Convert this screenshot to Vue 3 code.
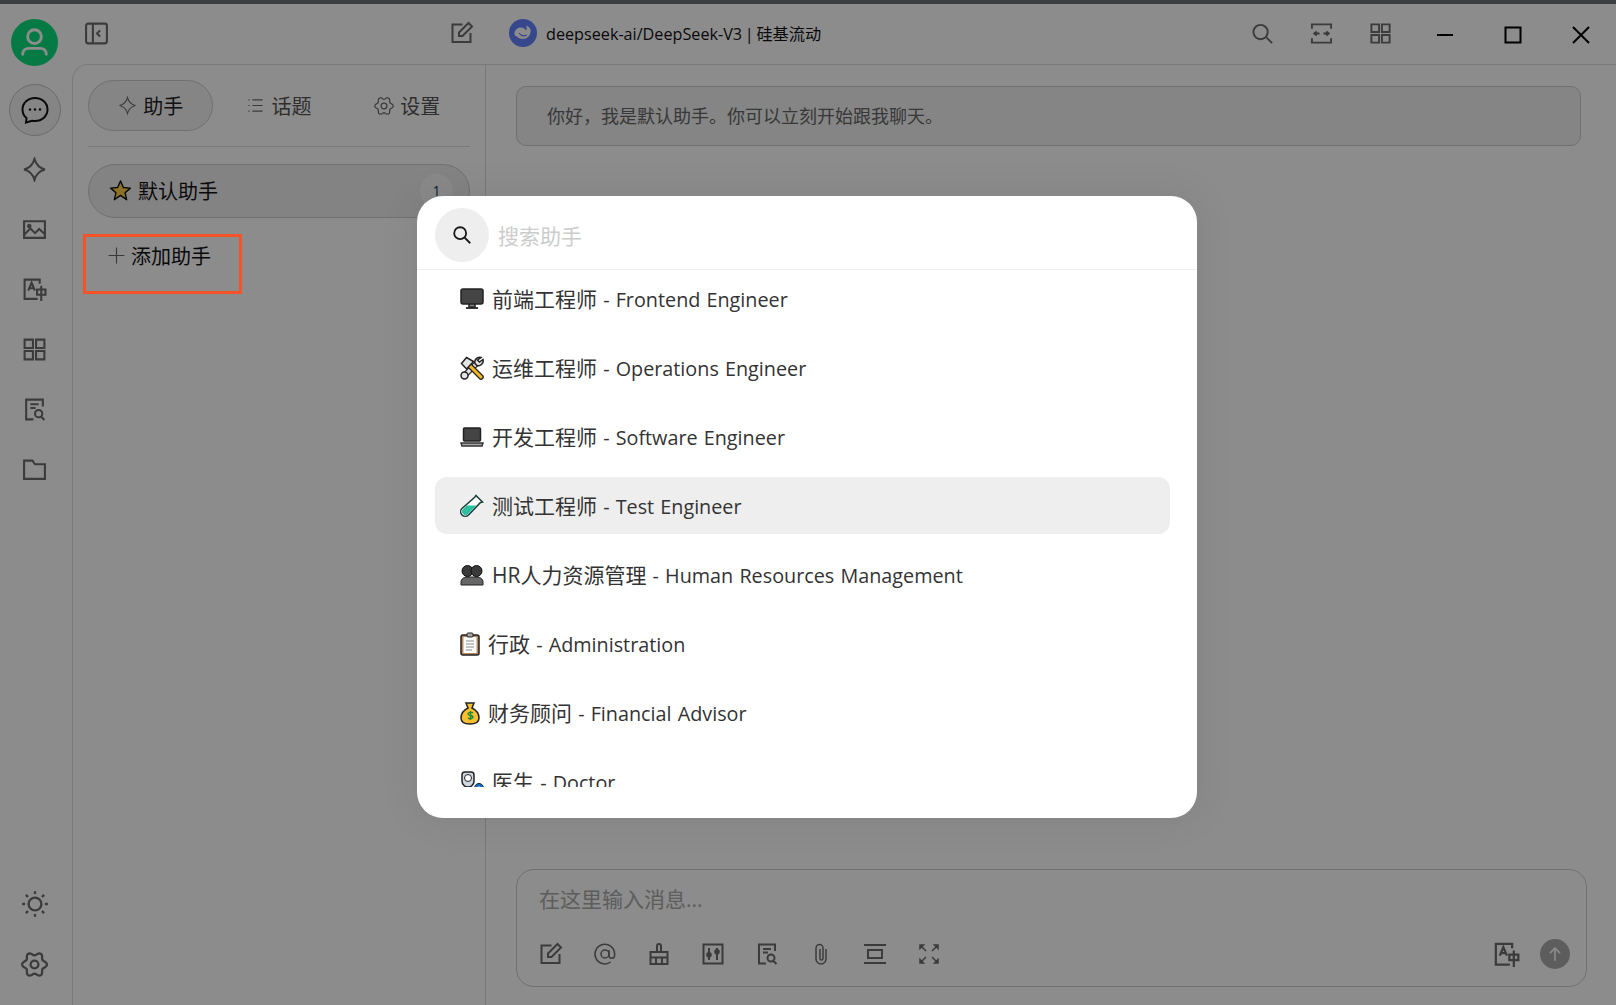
<script setup>
// six lobed outline, same shape as the settings icon in the reference
const gearOutline = Array.from({ length: 72 }, (_, i) => {
  const a = (i / 72) * Math.PI * 2
  const r = 9.6 + 1.5 * Math.cos(6 * a + Math.PI)
  const x = 12 + r * Math.sin(a)
  const y = 12 - r * Math.cos(a)
  return (i ? 'L' : 'M') + x.toFixed(2) + ' ' + y.toFixed(2)
}).join('') + 'z'

const icons = {
  collapse: ['M4 2.500h16a2 2 0 0 1 2 2v15a2 2 0 0 1-2 2H4a2 2 0 0 1-2-2v-15a2 2 0 0 1 2-2z', 'M8.500 2.500v19', 'M15.500 9l-3 3 3 3'],
  edit: ['M20.500 12v9h-18V3.500h10', 'M9 15v-3.500L18.500 2 22 5.500 12.500 15z'],
  search: ['M10 3a7.500 7.500 0 1 1 0 15 7.500 7.500 0 0 1 0-15z', 'M15.500 15.500L22 22'],
  expand: ['M2 7V2.500h20V7', 'M2 17v4.500h20V17', 'M4 12h6M7 10l-2.500 2 2.500 2', 'M20 12h-6M17 10l2.500 2-2.500 2'],
  grid: ['M2.500 2.500h8v8h-8z', 'M13.500 2.500h8v8h-8z', 'M2.500 13.500h8v8h-8z', 'M13.500 13.500h8v8h-8z'],
  star4: ['M12 2c1.500 5.500 4 8.500 10 10-6 1.500-8.500 4.500-10 10-1.500-5.500-4-8.500-10-10 6-1.500 8.500-4.500 10-10z'],
  image: ['M2 4h20v16H2z', 'M2 17l6-6 4.500 4.500 4-4L22 16.500', 'M7 7.500a1.200 1.200 0 1 1 0 2.400 1.200 1.200 0 0 1 0-2.400z'],
  translate: ['M17 6.500V2.500H2.500V21H15', 'M6 13l3.200-7.500L12.400 13M7.200 10.800h4', 'M14.500 12h8v5h-8zM18.500 8.500V23'],
  doc: ['M20 9V2.500H4v19h7', 'M8 7h8M8 10.500h5', 'M16 12.500a3.500 3.500 0 1 1 0 7 3.500 3.500 0 0 1 0-7zM18.500 19l3 3'],
  folder: ['M2 3.500h8l2.500 3.500H22v14H2z'],
  sun: ['M12 6.500a5.500 5.500 0 1 1 0 11 5.500 5.500 0 0 1 0-11z', 'M12 1v2.500M12 20.500V23M1 12h2.500M20.500 12H23M4.200 4.200L6 6M18 18l1.800 1.800M4.200 19.800L6 18M18 6l1.800-1.800'],
  gear: [gearOutline, 'M12 8.500a3.500 3.500 0 1 1 0 7 3.500 3.500 0 0 1 0-7z'],
  list: ['M8 5h13M8 12h13M8 19h13', 'M3 5h1.500M3 12h1.500M3 19h1.500'],
  plus: ['M12 2v20M2 12h20'],
  at: ['M12 8a4 4 0 1 1 0 8 4 4 0 0 1 0-8z', 'M16 8v5.500a2.800 2.800 0 0 0 5.600 0V12a9.800 9.800 0 1 0-4 8'],
  broom: ['M10 10V4a2 2 0 0 1 4 0v6', 'M3.500 22V10h17v12z', 'M3.500 15.500h17M9 15.500V22M15 15.500V22'],
  sliders: ['M2.500 2.500h19v19h-19z', 'M8 6v12M16 6v12', 'M8 11a1.800 1.800 0 1 1 0 3.600 1.800 1.800 0 0 1 0-3.600zM16 8a1.800 1.800 0 1 1 0 3.600 1.800 1.800 0 0 1 0-3.600z'],
  clip: ['M17 7v10a5 5 0 0 1-10 0V6a3.500 3.500 0 0 1 7 0v10.500a1.500 1.500 0 0 1-3 0V7'],
  compress: ['M1 3h22M1 21h22', 'M5 8h14v8H5z'],
  fullscreen: ['M3 3h3.500L3 6.500zM4 4l5 5', 'M21 3h-3.500L21 6.500zM20 4l-5 5', 'M3 21h3.500L3 17.500zM4 20l5-5', 'M21 21h-3.500l3.500-3.500zM20 20l-5-5'],
  win_min: ['M4 12h16'],
  win_max: ['M4.500 4.500h15v15h-15z'],
  win_close: ['M4 4l16 16M20 4L4 20']
}

const navItems = ['star4', 'image', 'translate', 'grid', 'doc', 'folder']
const toolItems = ['edit', 'at', 'broom', 'sliders', 'doc', 'clip', 'compress', 'fullscreen']

const assistants = [
  { id: 'monitor', zh: '前端工程师', en: 'Frontend Engineer' },
  { id: 'tools', zh: '运维工程师', en: 'Operations Engineer' },
  { id: 'laptop', zh: '开发工程师', en: 'Software Engineer' },
  { id: 'tube', zh: '测试工程师', en: 'Test Engineer', active: true },
  { id: 'people', zh: 'HR人力资源管理', en: 'Human Resources Management' },
  { id: 'board', zh: '行政', en: 'Administration', narrow: true },
  { id: 'bag', zh: '财务顾问', en: 'Financial Advisor', narrow: true },
  { id: 'doctor', zh: '医生', en: 'Doctor' }
]
</script>

<template>
  <div class="app">
    <div class="strip"></div>
    <div class="window">
      <aside class="sidebar">
        <div class="avatar">
          <svg viewBox="0 0 48 48" width="47" height="47" fill="none" stroke="#fff" stroke-width="3">
            <circle cx="24" cy="18" r="7" />
            <path d="M12 36v-1a6 6 0 0 1 6-5h12a6 6 0 0 1 6 5v1" stroke-linecap="round" />
          </svg>
        </div>
        <div class="nav-btn active">
          <svg viewBox="0 0 28 28" width="28" height="28" fill="none" stroke="#111" stroke-width="2">
            <path d="M14 2c7 0 12.500 5 12.500 11.500S21 25 14 25c-1 0-2 0-3-.300L5 26.500l.5-4.500C3 20 1.500 17 1.500 13.500 1.500 7 7 2 14 2z" />
            <circle cx="9" cy="13.500" r="1.200" fill="#111" stroke="none" />
            <circle cx="14" cy="13.500" r="1.200" fill="#111" stroke="none" />
            <circle cx="19" cy="13.500" r="1.200" fill="#111" stroke="none" />
          </svg>
        </div>
        <div v-for="name in navItems" :key="name" class="nav-btn">
          <svg class="icon" viewBox="0 0 24 24" width="25" height="25">
            <path v-for="d in icons[name]" :key="d" :d="d" />
          </svg>
        </div>
        <div class="spacer"></div>
        <div class="nav-btn">
          <svg class="icon" viewBox="0 0 24 24" width="28" height="28">
            <path v-for="d in icons.sun" :key="d" :d="d" />
          </svg>
        </div>
        <div class="nav-btn">
          <svg class="icon" viewBox="0 0 24 24" width="27" height="27">
            <path v-for="d in icons.gear" :key="d" :d="d" />
          </svg>
        </div>
      </aside>

      <div class="main">
        <header class="navbar">
          <div class="nav-left">
            <svg class="icon" viewBox="0 0 24 24" width="25" height="25">
              <path v-for="d in icons.collapse" :key="d" :d="d" />
            </svg>
            <svg class="icon" viewBox="0 0 24 24" width="24" height="24">
              <path v-for="d in icons.edit" :key="d" :d="d" />
            </svg>
          </div>
          <div class="nav-title">
            <svg viewBox="0 0 28 28" width="28" height="28">
              <circle cx="14" cy="14" r="14" fill="#6482ff" />
              <path d="M5.500 15c0-4 3-6.500 6.500-6.500 2 0 4 1 5 3 1-1.500 1-3 0-5 3 1 5.500 3.500 4.500 7-.5 3.500-3.500 6.500-7.500 6.500-3 0-5-1-6-2.500-1.200 0-2.500-1-2.500-2.500z" fill="#fff" />
              <path d="M10 14c2 3 5 3.500 8 2" fill="none" stroke="#6482ff" stroke-width="1.200" />
            </svg>
            <span>deepseek-ai/DeepSeek-V3 | 硅基流动</span>
          </div>
          <div class="nav-right">
            <svg class="icon" viewBox="0 0 24 24" width="23" height="23">
              <path v-for="d in icons.search" :key="d" :d="d" />
            </svg>
            <svg class="icon" viewBox="0 0 24 24" width="23" height="23">
              <path v-for="d in icons.expand" :key="d" :d="d" />
            </svg>
            <svg class="icon" viewBox="0 0 24 24" width="23" height="23">
              <path v-for="d in icons.grid" :key="d" :d="d" />
            </svg>
            <div class="win-btns">
              <svg v-for="name in ['win_min', 'win_max', 'win_close']" :key="name" class="win-icon" viewBox="0 0 24 24" width="24" height="24">
                <path v-for="d in icons[name]" :key="d" :d="d" />
              </svg>
            </div>
          </div>
        </header>

        <div class="content">
          <section class="panel">
            <div class="tabs">
              <div class="tab active">
                <svg class="icon thin" viewBox="0 0 24 24" width="19" height="19">
                  <path v-for="d in icons.star4" :key="d" :d="d" />
                </svg>
                助手
              </div>
              <div class="tab">
                <svg class="icon thin" viewBox="0 0 24 24" width="19" height="19">
                  <path v-for="d in icons.list" :key="d" :d="d" />
                </svg>
                话题
              </div>
              <div class="tab">
                <svg class="icon thin" viewBox="0 0 24 24" width="20" height="20">
                  <path v-for="d in icons.gear" :key="d" :d="d" />
                </svg>
                设置
              </div>
            </div>
            <div class="assistant-row">
              <svg viewBox="0 0 24 24" width="23" height="23">
                <path d="M12 2l3 6.800 7.300.7-5.500 4.900 1.600 7.200L12 17l-6.400 4.600 1.600-7.200L1.700 9.500 9 8.800z" fill="#ffd040" stroke="#111" stroke-width="1.500" stroke-linejoin="round" />
              </svg>
              <span>默认助手</span>
              <em class="count">1</em>
            </div>
            <div class="add-row">
              <svg class="icon thin" viewBox="0 0 24 24" width="19" height="19">
                <path v-for="d in icons.plus" :key="d" :d="d" />
              </svg>
              添加助手
            </div>
          </section>

          <section class="chat">
            <div class="message">你好，我是默认助手。你可以立刻开始跟我聊天。</div>
            <div class="spacer"></div>
            <div class="inputbar">
              <div class="placeholder">在这里输入消息...</div>
              <div class="tools">
                <svg v-for="name in toolItems" :key="name" class="icon" :class="{ thin: name === 'at' || name === 'clip' || name === 'fullscreen' }" viewBox="0 0 24 24" width="24" height="24">
                  <path v-for="d in icons[name]" :key="d" :d="d" />
                </svg>
                <div class="spacer"></div>
                <svg class="icon translate" viewBox="0 0 24 24" width="27" height="27">
                  <path v-for="d in icons.translate" :key="d" :d="d" />
                </svg>
                <div class="send">
                  <svg viewBox="0 0 24 24" width="20" height="20" fill="none" stroke="#fff" stroke-width="2">
                    <path d="M12 20V5M6 11l6-6 6 6" />
                  </svg>
                </div>
              </div>
            </div>
          </section>
        </div>
      </div>
    </div>

    <div class="overlay"></div>
    <div class="redbox"></div>

    <div class="modal">
      <div class="modal-search">
        <div class="search-circle">
          <svg viewBox="0 0 24 24" width="22" height="22" fill="none" stroke="#1a1a1a" stroke-width="2">
            <circle cx="10" cy="10" r="6.500" />
            <path d="M15 15l6 6" />
          </svg>
        </div>
        <span class="search-hint">搜索助手</span>
      </div>
      <div class="list">
        <div v-for="item in assistants" :key="item.id" class="item" :class="{ selected: item.active }">
          <svg class="emoji" :class="{ narrow: item.narrow }" :viewBox="item.narrow ? '0 0 20 24' : '0 0 24 24'">
            <template v-if="item.id === 'monitor'">
              <path d="M9 17v3h6v-3" fill="#888" stroke="#222" stroke-width="1.500" />
              <path d="M6 21h12" stroke="#222" stroke-width="1.800" />
              <rect x="1" y="2" width="22" height="15" rx="2" fill="#444" stroke="#222" stroke-width="1.500" />
            </template>
            <template v-else-if="item.id === 'tools'">
              <path d="M5 19L17 7" stroke="#222" stroke-width="6" />
              <path d="M5 19L17 7" stroke="#e4e4e4" stroke-width="3.500" />
              <path d="M21 1.500c-3.500-1-7 2-6 6l2 2c3.500 1 7-2.500 6-6l-3.500 2.500-2-2z" fill="#e4e4e4" stroke="#222" stroke-width="1.500" />
              <circle cx="4.500" cy="19.500" r="3.500" fill="#e4e4e4" stroke="#222" stroke-width="1.500" />
              <path d="M9 9l12 12" stroke="#222" stroke-width="5.500" stroke-linecap="round" />
              <path d="M9 9l12 12" stroke="#f5b81f" stroke-width="3" stroke-linecap="round" />
              <path d="M1.500 7.500l5-6 7 4-7 7.500z" fill="#e4e4e4" stroke="#222" stroke-width="1.500" />
            </template>
            <template v-else-if="item.id === 'laptop'">
              <rect x="3.500" y="3" width="17" height="13" rx="1" fill="#444" stroke="#222" stroke-width="1.500" />
              <path d="M1 18h22l-1 3H2z" fill="#aaa" stroke="#333" stroke-width="1.500" />
            </template>
            <template v-else-if="item.id === 'tube'">
              <path d="M16 1.500l6.500 6.500-2 .5L8.500 21a4.500 4.500 0 0 1-6.500-6.500L15 3z" fill="#fff" stroke="#1a3a36" stroke-width="1.500" />
              <path d="M6.500 11.500h10L8 20a3.300 3.300 0 0 1-5-4.800z" fill="#2ebfa0" />
            </template>
            <template v-else-if="item.id === 'people'">
              <path d="M1 22v-3c0-3 3-5 6-5h10c3 0 6 2 6 5v3z" fill="#666" stroke="#222" />
              <circle cx="7.500" cy="8" r="5.500" fill="#3a3a3a" stroke="#111" />
              <circle cx="16.500" cy="8" r="5.500" fill="#3a3a3a" stroke="#111" />
            </template>
            <template v-else-if="item.id === 'board'">
              <rect x="1" y="3" width="18" height="20" rx="2" fill="#b98a60" stroke="#222" stroke-width="1.500" />
              <rect x="3.500" y="5" width="13" height="16" fill="#fff" />
              <path d="M6 9h8M6 12h8M6 15h8M6 18h6" stroke="#888" />
              <rect x="7" y="1" width="6" height="4" rx="1" fill="#aaa" stroke="#222" />
            </template>
            <template v-else-if="item.id === 'bag'">
              <path d="M6 2h8l-2 5c4 2 7 6 7 10 0 4-4 6-9 6s-9-2-9-6c0-4 3-8 7-10z" fill="#fbc02d" stroke="#222" stroke-width="1.500" />
              <path d="M13 12c-1-1-5-1-5 1 0 2 5 1 5 3 0 2-4 2-5 1M10.500 10v9" fill="none" stroke="#1e8a3e" stroke-width="1.500" />
            </template>
            <template v-else>
              <path d="M5 2h6a3 3 0 0 1 3 3v6a6 6 0 0 1-12 0V5a3 3 0 0 1 3-3z" fill="#cfd8e0" stroke="#222" stroke-width="1.500" />
              <circle cx="8" cy="8" r="3.500" fill="#fff" stroke="#222" />
              <path d="M8 17v3a3 3 0 0 0 6 0" fill="none" stroke="#1a6fc0" stroke-width="2.500" />
              <circle cx="19" cy="18" r="4.500" fill="#1a6fc0" stroke="#123" />
              <circle cx="19" cy="18" r="1.500" fill="#fff" />
            </template>
          </svg>
          <span>{{ item.zh }}<span class="en"> - {{ item.en }}</span></span>
        </div>
      </div>
    </div>
  </div>
</template>

<style>
html, body {
  height: 100%;
  overflow: hidden;
  background: #fff;
}
</style>

<style scoped>
.app {
  position: relative;
  height: 100vh;
  display: flex;
  flex-direction: column;
  font-family: "Open Sans", "Noto Sans CJK SC", sans-serif;
  color: #222;
  background: #fff;
  overflow: hidden;
}

.strip {
  height: 4px;
  background: #3c3f41;
  position: relative;
  z-index: 20;
  flex: none;
}

.window {
  flex: 1;
  display: flex;
  min-height: 0;
}

.sidebar {
  width: 72px;
  flex: none;
  display: flex;
  flex-direction: column;
  align-items: center;
  padding: 15px 3px 15px 0;
  box-sizing: border-box;
}

.avatar {
  width: 47px;
  height: 47px;
  border-radius: 50%;
  background: #0bdf7d;
  margin-bottom: 18px;
  flex: none;
}

.nav-btn {
  width: 52px;
  height: 52px;
  margin-bottom: 8px;
  flex: none;
  border-radius: 50%;
  display: flex;
  align-items: center;
  justify-content: center;
}

.nav-btn:last-child {
  margin-bottom: 0;
}

.nav-btn.active {
  background: #f2f2f2;
  border: 1px solid #c4c4c4;
  box-sizing: border-box;
  margin-bottom: 7px;
}

.icon {
  fill: none;
  stroke: #6c6c6c;
  stroke-width: 2;
  flex: none;
}

.icon.thin {
  stroke-width: 1.500;
}

.win-icon {
  fill: none;
  stroke: #000;
  stroke-width: 2;
}

.spacer {
  flex: 1;
}

.main {
  flex: 1;
  min-width: 0;
  display: flex;
  flex-direction: column;
}

.navbar {
  height: 60px;
  flex: none;
  display: flex;
  align-items: center;
  box-sizing: border-box;
  padding-bottom: 2px;
}

.nav-left {
  width: 414px;
  flex: none;
  display: flex;
  justify-content: space-between;
  padding: 0 12px;
  box-sizing: border-box;
}

.nav-title {
  display: flex;
  align-items: center;
  gap: 9px;
  margin-left: 23px;
  font-size: 16.200px;
  word-spacing: -1.500px;
  color: #111;
}

.nav-right {
  margin-left: auto;
  display: flex;
  align-items: center;
  gap: 36px;
  padding-right: 23px;
}

.win-btns {
  display: flex;
  gap: 44px;
  margin: 3px 0 0 5px;
}

.content {
  flex: 1;
  min-height: 0;
  display: flex;
  border-top: 1px solid #ddd;
  border-left: 1px solid #ddd;
  border-top-left-radius: 16px;
}

.panel {
  width: 413px;
  flex: none;
  box-sizing: border-box;
  border-right: 1px solid #ddd;
  padding: 15px 15px 0;
}

.tabs {
  display: grid;
  grid-template-columns: repeat(3, 1fr);
  gap: 3px;
  padding-bottom: 15px;
  border-bottom: 1px solid #ddd;
  margin-bottom: 17px;
}

.tab {
  height: 51px;
  box-sizing: border-box;
  border-radius: 26px;
  display: flex;
  align-items: center;
  justify-content: center;
  gap: 6px;
  font-size: 20px;
  color: #555;
}

.tab.active {
  background: #f2f2f2;
  border: 1px solid #ccc;
  color: #222;
}

.assistant-row {
  height: 54px;
  box-sizing: border-box;
  border: 1px solid #ccc;
  border-radius: 27px;
  background: #eee;
  display: flex;
  align-items: center;
  gap: 6px;
  padding: 0 16px 2px 20px;
  font-size: 20px;
  color: #111;
}

.count {
  margin-left: auto;
  width: 33px;
  height: 33px;
  border-radius: 50%;
  background: #fafafa;
  display: flex;
  align-items: center;
  justify-content: center;
  font-size: 14px;
  font-style: normal;
  color: #0a3a6a;
}

.add-row {
  display: flex;
  align-items: center;
  gap: 5px;
  font-size: 20px;
  color: #111;
  margin-top: 23px;
  padding-left: 19px;
}

.chat {
  flex: 1;
  min-width: 0;
  display: flex;
  flex-direction: column;
  padding: 21px 29px 18px 30px;
}

.message {
  height: 60px;
  margin-right: 6px;
  box-sizing: border-box;
  border: 1px solid #ccc;
  border-radius: 10px;
  background: #f2f2f2;
  display: flex;
  align-items: center;
  padding: 0 30px 2px;
  font-size: 18px;
  color: #666;
}

.inputbar {
  height: 118px;
  box-sizing: border-box;
  border: 1px solid #ccc;
  border-radius: 18px;
  padding: 15px 16px 0 22px;
}

.placeholder {
  font-size: 21px;
  color: #aaa;
  line-height: 28px;
}

.tools {
  display: flex;
  align-items: center;
  gap: 30px;
  margin-top: 26px;
}

.send {
  width: 30px;
  height: 30px;
  border-radius: 50%;
  background: #aaa;
  display: flex;
  align-items: center;
  justify-content: center;
  margin-left: -10px;
}

.overlay {
  position: absolute;
  inset: 0;
  background: rgba(0, 0, 0, 0.45);
  z-index: 10;
}

.redbox {
  position: absolute;
  left: 83px;
  top: 234px;
  width: 159px;
  height: 60px;
  box-sizing: border-box;
  border: 3px solid #f4532a;
  z-index: 11;
}

.modal {
  position: absolute;
  left: 417px;
  top: 196px;
  width: 780px;
  height: 622px;
  background: #fff;
  border-radius: 26px;
  box-shadow: 0 0 40px rgba(0, 0, 0, 0.08);
  z-index: 12;
  display: flex;
  flex-direction: column;
}

.modal-search {
  height: 74px;
  flex: none;
  box-sizing: border-box;
  border-bottom: 1px solid #eee;
  display: flex;
  align-items: center;
  gap: 9px;
  padding: 5px 18px 0;
}

.search-circle {
  width: 54px;
  height: 54px;
  border-radius: 50%;
  background: #eee;
  display: flex;
  align-items: center;
  justify-content: center;
}

.search-hint {
  font-size: 21px;
  color: #ccc;
}

.list {
  height: 517px;
  overflow: hidden;
  padding: 0 27px 0 18px;
  display: flex;
  flex-direction: column;
  gap: 12px;
}

.item {
  height: 57px;
  flex: none;
  box-sizing: border-box;
  border-radius: 12px;
  display: flex;
  align-items: center;
  gap: 8px;
  padding: 0 25px 2px;
  font-size: 21px;
  color: #333;
}

.item .en {
  font-size: 19.800px;
  word-spacing: 1px;
}

.item.selected {
  background: #eee;
}

.emoji {
  width: 24px;
  height: 24px;
  flex: none;
  margin-top: 2px;
}

.emoji.narrow {
  width: 20px;
}
</style>
